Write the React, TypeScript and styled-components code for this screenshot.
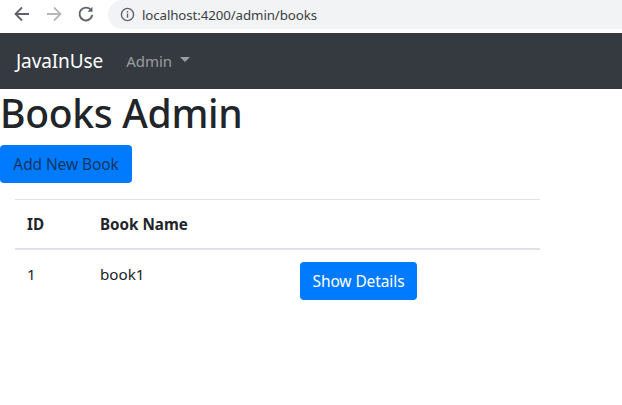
import styled, { createGlobalStyle } from 'styled-components'

const GlobalStyle = createGlobalStyle`
html, body {
  margin: 0;
  padding: 0;
  background: #fff;
  font-family: "Noto Sans", "Open Sans", "Liberation Sans", sans-serif;
  color: #212529;
  overflow: hidden;
}
`

const Page = styled.div`
width: 622px;
height: 405px;
overflow: hidden;
`

const Chrome = styled.div`
height: 33px;
display: flex;
align-items: flex-start;
padding: 4px 0 0 12px;
box-sizing: border-box;
background: #fff;
`

const NavIcon = styled.svg`
width: 20px;
height: 20px;
margin-right: 12px;
flex-shrink: 0;
`

const UrlBar = styled.div`
flex: 1;
height: 29px;
margin-top: -4px;
margin-right: -20px;
padding-left: 12px;
border-radius: 15px;
background: #f1f3f4;
display: flex;
align-items: center;
`

const UrlText = styled.span`
margin-left: 7px;
font-size: 13.300px;
color: #3c4043;
letter-spacing: -0.1px;
`

const Navbar = styled.nav`
height: 56px;
background: #343a40;
display: flex;
align-items: center;
padding-left: 16px;
`

const Brand = styled.div`
font-size: 19px;
color: #fff;
margin-right: 23px;
letter-spacing: -0.1px;
`

const NavLink = styled.div`
font-size: 15px;
color: rgba(255, 255, 255, 0.5);
display: flex;
align-items: center;
`

const Caret = styled.span`
margin-left: 8px;
margin-top: -3px;
border-top: 5px solid rgba(255, 255, 255, 0.5);
border-left: 5px solid transparent;
border-right: 5px solid transparent;
`

const Title = styled.h1`
margin: 0 0 8px;
font-size: 39px;
font-weight: 500;
line-height: 48px;
letter-spacing: -0.3px;
`

const Button = styled.button<{ $dark?: boolean }>`
height: 38px;
padding: 0;
border: 0;
border-radius: 4px;
background: #007bff;
color: ${({ $dark }) => ($dark ? '#16365f' : '#fff')};
font-family: inherit;
font-size: 15.500px;
letter-spacing: -0.1px;
white-space: nowrap;
`

const AddButton = styled(Button)`
width: 132px;
display: block;
`

const DetailButton = styled(Button)`
width: 117px;
`

const TableWrap = styled.div`
margin: 16px 0 0 15px;
width: 525px;
`

const Table = styled.table`
width: 100%;
border-collapse: collapse;
table-layout: fixed;
font-size: 15.200px;
`

const Th = styled.th<{ $w?: number }>`
width: ${({ $w }) => ($w ? `${$w}px` : 'auto')};
height: 49px;
padding: 0 0 0 12px;
box-sizing: border-box;
text-align: left;
font-weight: 700;
border-top: 1px solid #dee2e6;
border-bottom: 2px solid #dee2e6;
`

const Td = styled.td`
padding: 12px 0 0 12px;
vertical-align: top;
line-height: 24px;
`

const ActionTd = styled(Td)`
padding-left: 0;
`

export default function App() {
  return (
    <Page>
      <GlobalStyle />
      <Chrome>
        <NavIcon viewBox="0 0 20 20" fill="none" stroke="#5f6368" strokeWidth="1.8">
          <path d="M17 10H4M10 3.500 3.500 10l6.500 6.500" />
        </NavIcon>
        <NavIcon viewBox="0 0 20 20" fill="none" stroke="#b4b6b9" strokeWidth="1.8">
          <path d="M3 10h13M10 3.500l6.500 6.500L10 16.500" />
        </NavIcon>
        <NavIcon viewBox="0 0 20 20" fill="none" stroke="#5f6368" strokeWidth="1.900">
          <path d="M15.200 6.300A6.400 6.400 0 1 0 16.300 11" />
          <path d="M16.500 2.800v5h-5z" fill="#5f6368" stroke="none" />
        </NavIcon>
        <UrlBar>
          <svg width="15" height="15" viewBox="0 0 16 16" fill="none" stroke="#5f6368" strokeWidth="1.500">
            <circle cx="8" cy="8" r="6.500" />
            <path d="M8 7v4.500M8 4.300v1.500" />
          </svg>
          <UrlText>localhost:4200/admin/books</UrlText>
        </UrlBar>
      </Chrome>
      <Navbar>
        <Brand>JavaInUse</Brand>
        <NavLink>
          Admin
          <Caret />
        </NavLink>
      </Navbar>
      <Title>Books Admin</Title>
      <AddButton $dark>Add New Book</AddButton>
      <TableWrap>
        <Table>
          <thead>
            <tr>
              <Th $w={73}>ID</Th>
              <Th $w={212}>Book Name</Th>
              <Th />
            </tr>
          </thead>
          <tbody>
            <tr>
              <Td>1</Td>
              <Td>book1</Td>
              <ActionTd>
                <DetailButton>Show Details</DetailButton>
              </ActionTd>
            </tr>
          </tbody>
        </Table>
      </TableWrap>
    </Page>
  )
}
